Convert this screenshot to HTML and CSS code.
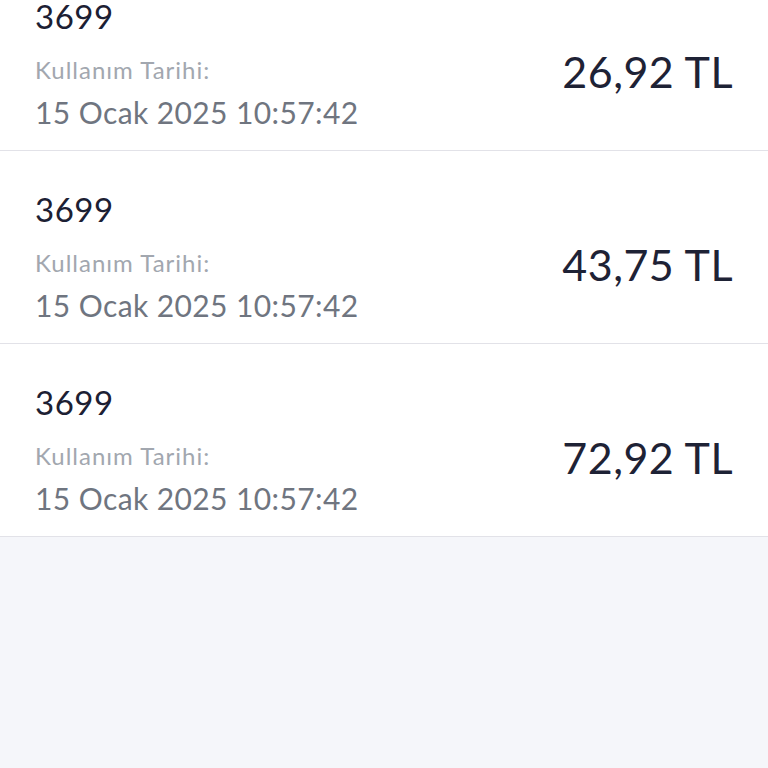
FILE: index.html
```html
<!DOCTYPE html>
<html lang="tr">
<head>
    <meta charset="UTF-8">
    <meta name="viewport" content="width=device-width, initial-scale=1.0">
    <title>Kullanım Geçmişi</title>
    <link rel="stylesheet" href="styles.css">
</head>
<body>
    <div class="list">
        <div class="item">
            <div class="info">
                <div class="code">3699</div>
                <div class="label">Kullanım Tarihi:</div>
                <div class="date">15 Ocak 2025 10:57:42</div>
            </div>
            <div class="amount">26,92 TL</div>
        </div>
        <div class="item">
            <div class="info">
                <div class="code">3699</div>
                <div class="label">Kullanım Tarihi:</div>
                <div class="date">15 Ocak 2025 10:57:42</div>
            </div>
            <div class="amount">43,75 TL</div>
        </div>
        <div class="item">
            <div class="info">
                <div class="code">3699</div>
                <div class="label">Kullanım Tarihi:</div>
                <div class="date">15 Ocak 2025 10:57:42</div>
            </div>
            <div class="amount">72,92 TL</div>
        </div>
    </div>
</body>
</html>
```

FILE: styles.css
```css
body {
    font-family: Lato, "Noto Sans", sans-serif;
    background-color: #f5f6fa;
    margin: 0;
    padding: 0;
    height: 768px;
    overflow: hidden;
}

.list {
    margin-top: -42px;
    background: #fff;
}

.item {
    display: flex;
    justify-content: space-between;
    align-items: flex-start;
    height: 193px;
    box-sizing: border-box;
    padding: 0 35px;
    border-bottom: 1px solid #e2e2e8;
}

.info {
    display: flex;
    flex-direction: column;
    padding-top: 38px;
}

.code {
    font-size: 33px;
    line-height: 40px;
    letter-spacing: 0.5px;
    color: #1c2033;
}

.label {
    margin-top: 19px;
    font-size: 24px;
    line-height: 30px;
    letter-spacing: 1px;
    color: #a2a7af;
}

.date {
    margin-top: 9px;
    font-size: 30px;
    line-height: 36px;
    letter-spacing: 0.4px;
    color: #6f7580;
}

.amount {
    padding-top: 89px;
    font-size: 43px;
    line-height: 50px;
    letter-spacing: 0.5px;
    color: #1e2235;
}
```
